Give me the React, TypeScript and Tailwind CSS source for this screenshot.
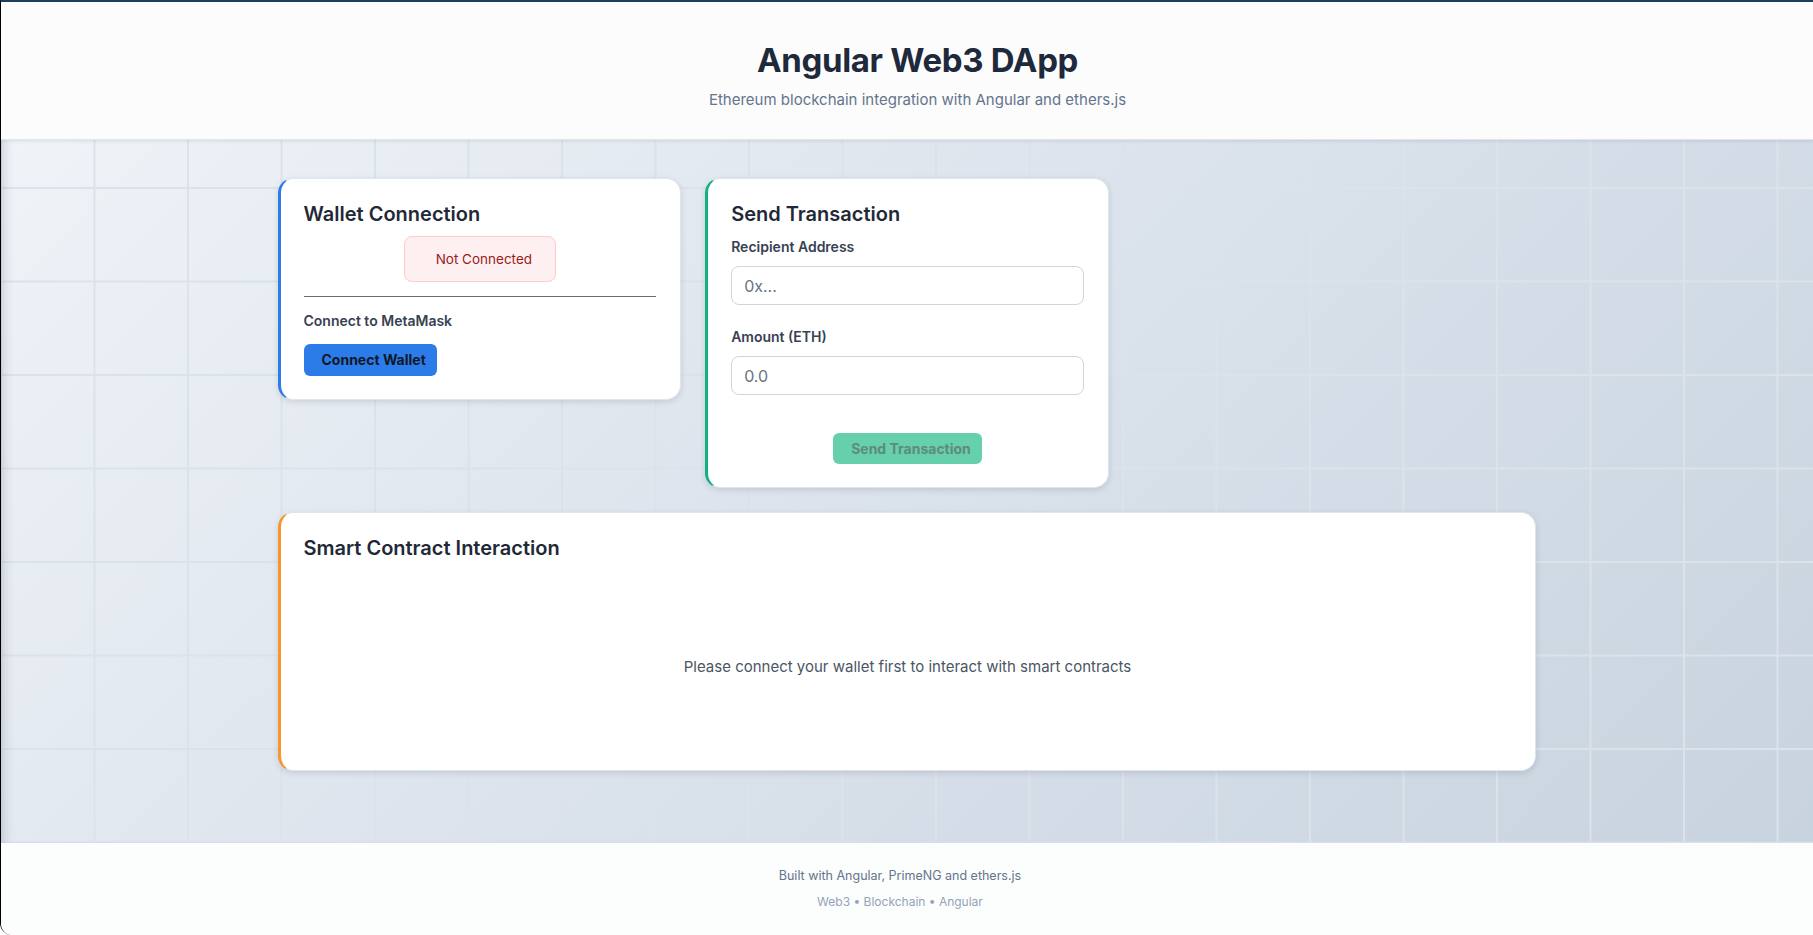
import React from "react";

const font = { fontFamily: "Inter, 'Noto Sans', sans-serif" };

function Card({
  accent,
  className = "",
  children,
}: {
  accent: string;
  className?: string;
  children: React.ReactNode;
}) {
  return (
    <section
      className={`rounded-[15px] border border-[#dfe5ec] border-l-[3px] bg-white pl-[23px] pr-6 pt-[21px] pb-[23px] shadow-[0_2px_6px_rgba(15,23,42,0.13)] ${accent} ${className}`}
    >
      {children}
    </section>
  );
}

function WalletCard() {
  return (
    <Card accent="border-l-[#2b7de9]" className="self-start">
      <h2 className="text-[20px] font-semibold leading-7 text-[#1f2937]">Wallet Connection</h2>
      <div className="mt-[8px] flex justify-center">
        <div className="flex h-[46px] items-center rounded-lg border border-[#fecaca] bg-[#fef0f0] pl-[31px] pr-[23px] text-[13.5px] text-[#991b1b]">
          Not Connected
        </div>
      </div>
      <hr className="mt-[14px] border-0 border-t border-[#6b6b72]" />
      <p className="mt-[14px] text-sm font-semibold leading-5 text-[#374151]">Connect to MetaMask</p>
      <button
        type="button"
        className="mt-[13px] flex h-[32px] items-center rounded-md bg-[#2b7ce9] pl-[18px] pr-[11px] text-sm font-bold text-[#111827]"
      >
        Connect Wallet
      </button>
    </Card>
  );
}

function SendCard() {
  return (
    <Card accent="border-l-[#12b07f]" className="self-start">
      <h2 className="text-[20px] font-semibold leading-7 text-[#1f2937]">Send Transaction</h2>
      <label className="mt-[9px] block text-sm font-semibold leading-5 text-[#374151]">Recipient Address</label>
      <input
        placeholder="0x..."
        className="mt-[9px] block h-[39px] w-full rounded-lg border border-[#d1d5db] px-3 text-base text-[#374151] placeholder:text-[#6b7280] outline-none"
      />
      <label className="mt-[22px] block text-sm font-semibold leading-5 text-[#374151]">Amount (ETH)</label>
      <input
        placeholder="0.0"
        className="mt-[9px] block h-[39px] w-full rounded-lg border border-[#d1d5db] px-3 text-base text-[#374151] placeholder:text-[#6b7280] outline-none"
      />
      <div className="mt-[38px] flex justify-center">
        <button
          type="button"
          disabled
          className="flex h-[31px] items-center rounded-md bg-[#66d0ad] pl-[18px] pr-[11px] text-sm font-bold text-[#5f8a7c]"
        >
          Send Transaction
        </button>
      </div>
    </Card>
  );
}

function ContractCard() {
  return (
    <Card accent="border-l-[#f8952f]" className="col-span-3">
      <h2 className="text-[20px] font-semibold leading-7 text-[#1f2937]">Smart Contract Interaction</h2>
      <p className="pt-[93px] pb-[68px] text-center text-[15px] leading-6 text-[#4b5563]">
        Please connect your wallet first to interact with smart contracts
      </p>
    </Card>
  );
}

export default function App() {
  return (
    <div
      style={font}
      className="flex min-h-screen flex-col overflow-hidden rounded-bl-xl border-l border-t-2 border-l-black border-t-[#1f3d5c] bg-[linear-gradient(135deg,#f2f5f9_0%,#dde4ed_45%,#c6d2de_100%)]"
    >
      <header className="relative z-10 flex h-[138px] flex-col items-center border-b border-[#dfe5ec] bg-[#fcfcfd] pl-[21px] shadow-[0_1px_4px_rgba(15,23,42,0.08)]">
        <h1 className="mt-[38px] text-[33px] font-bold leading-10 tracking-[-0.01em] text-[#1e293b]">
          Angular Web3 DApp
        </h1>
        <p className="mt-[8px] text-[15px] leading-6 text-[#64748b]">
          Ethereum blockchain integration with Angular and ethers.js
        </p>
      </header>

      <main className="flex-1 bg-[linear-gradient(#dbe2ea_2px,transparent_2px),linear-gradient(90deg,#dbe2ea_2px,transparent_2px)] bg-[length:93.5px_93.5px] bg-[position:-1px_47px] shadow-[inset_10px_0_12px_-8px_rgba(15,23,42,0.18)]">
        <div className="mx-auto grid max-w-[1259px] grid-cols-3 items-start gap-6 pt-[38px] pb-[72px]">
          <WalletCard />
          <SendCard />
          <div />
          <ContractCard />
        </div>
      </main>

      <footer className="flex h-[92px] flex-col items-center bg-[#fcfdfd] pt-[23px] pr-[14px]">
        <p className="text-[12.5px] leading-5 text-[#64748b]">Built with Angular, PrimeNG and ethers.js</p>
        <p className="mt-2 text-[12px] leading-4 text-[#94a3b8]">Web3 • Blockchain • Angular</p>
      </footer>
    </div>
  );
}
